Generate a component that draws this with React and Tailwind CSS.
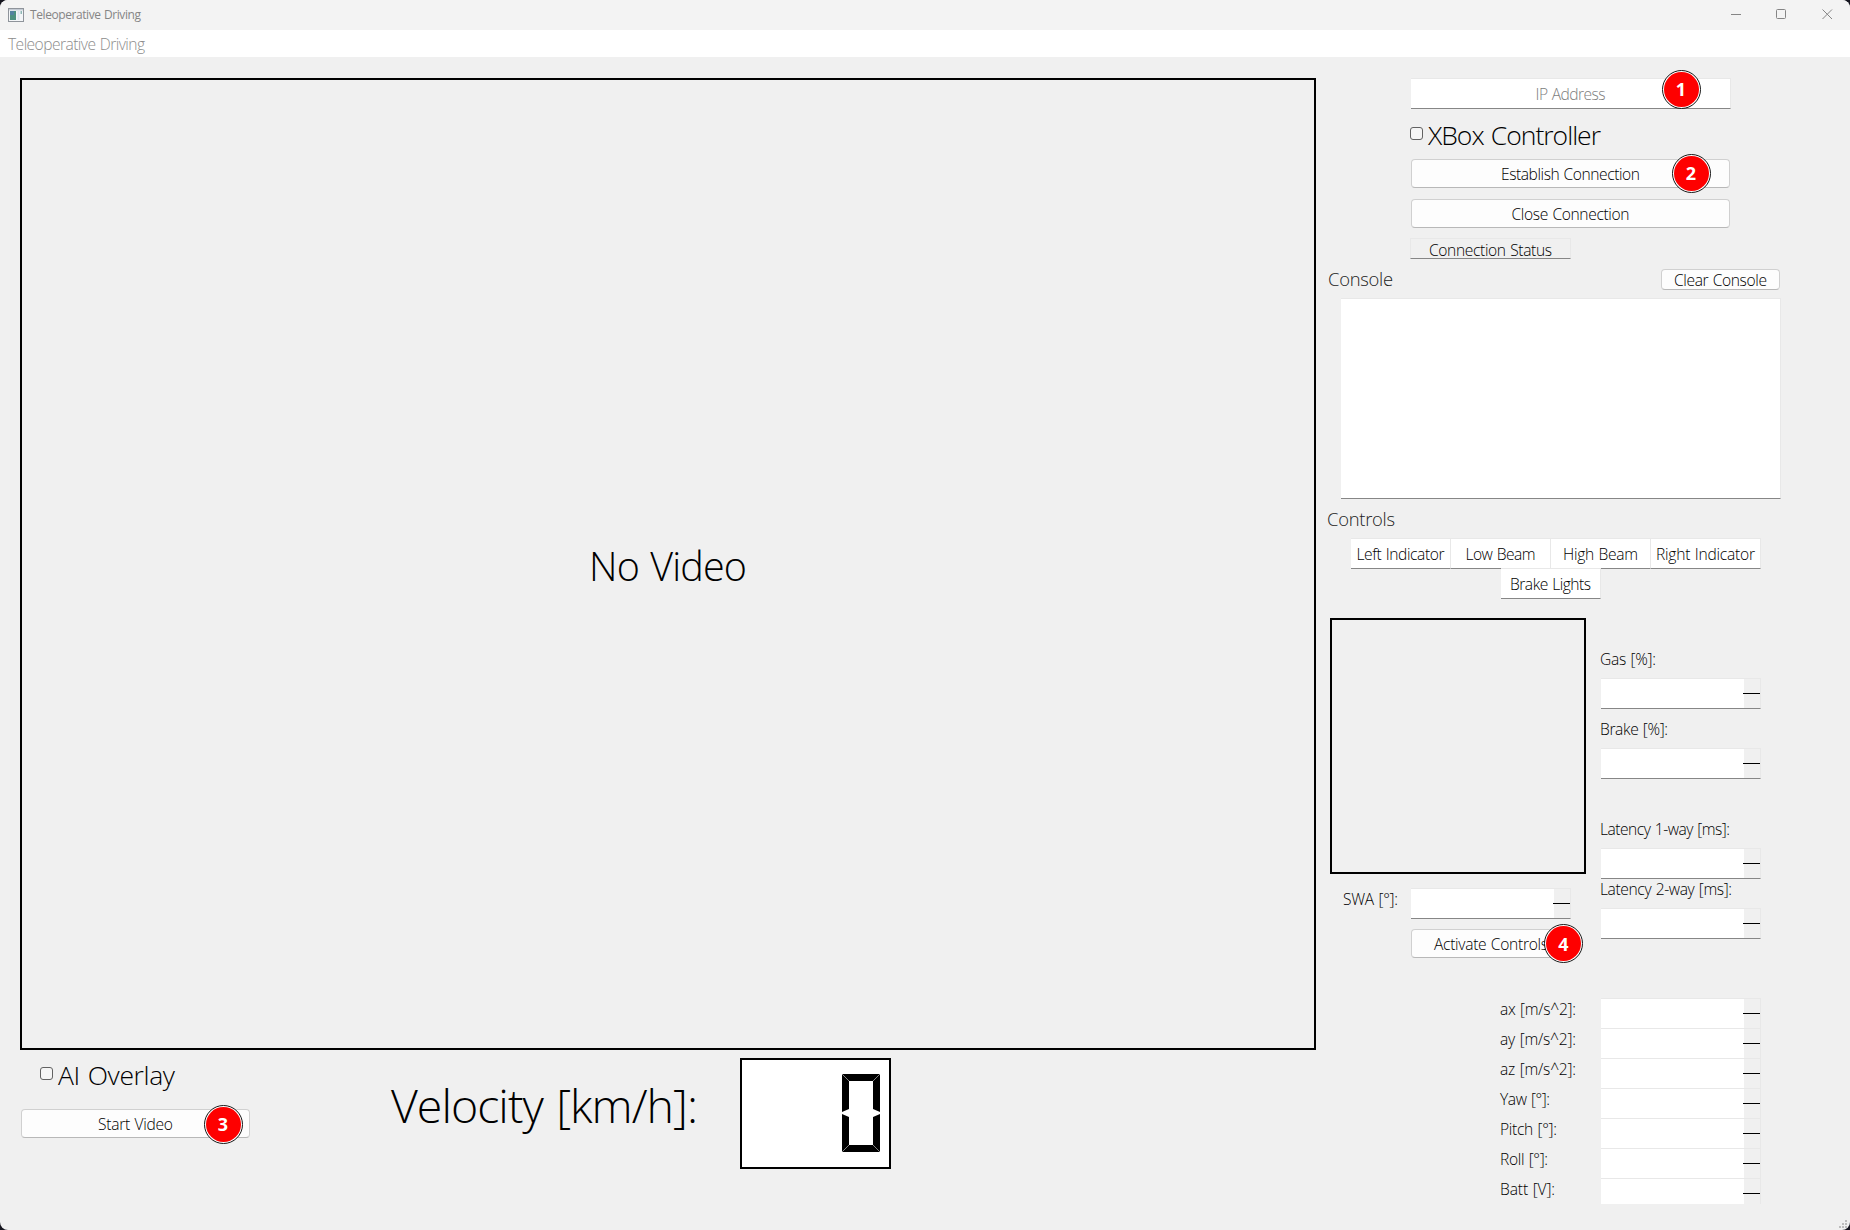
import { useLayoutEffect, useRef } from "react";

// Text whose tracking is adjusted so that its advance is exactly `w` pixels.
function Fit({ w, className = "", children }) {
  const ref = useRef(null);
  useLayoutEffect(() => {
    const el = ref.current;
    el.style.letterSpacing = "0px";
    const natural = el.getBoundingClientRect().width;
    const spacing = (w - natural) / (children.length - 1);
    el.style.letterSpacing = `${spacing}px`;
    el.style.marginRight = `${-spacing}px`;
  }, [w, children]);
  return (
    <span
      ref={ref}
      className={`inline-block whitespace-pre [word-spacing:0.05em] ${className}`}
    >
      {children}
    </span>
  );
}

function Badge({ n, className }) {
  return (
    <div
      className={`absolute z-10 flex size-[39px] items-center justify-center rounded-full border-[1.5px] border-[#161616] bg-white p-px ${className}`}
    >
      <div className="flex size-full items-center justify-center rounded-full bg-[#fe0000] text-[18px] leading-none font-bold text-white">
        {n}
      </div>
    </div>
  );
}

function Button({ children, w, className }) {
  return (
    <button
      className={`flex items-center justify-center rounded-[4px] border border-[#d0d0d0] border-b-[#b8b8b8] bg-[#fdfdfd] pt-px text-[15.6px] leading-4 ${className}`}
    >
      <Fit w={w}>{children}</Fit>
    </button>
  );
}

function Check({ children, w, className }) {
  return (
    <label className={`flex h-8 items-start ${className}`}>
      <span className="mt-2 size-[13px] rounded-[3px] border border-[#626262] bg-[#f5f5f5]" />
      <span className="ml-[5px] text-[26.5px] leading-8">
        <Fit w={w}>{children}</Fit>
      </span>
    </label>
  );
}

// Numeric display with a collapsed spin area at its right end.
function Spin({ className = "h-[31px] border-b border-b-[#868686]" }) {
  return (
    <div
      className={`ml-px flex w-[160px] shrink-0 border-t border-r border-[#e8e8e8] ${className}`}
    >
      <div className="w-[143px] bg-white" />
      <div className="mt-[14px] -ml-px h-px w-[17px] bg-black" />
    </div>
  );
}

function Field({ label, w, className }) {
  return (
    <div className={className}>
      <div className="h-5 text-[15.6px] leading-5">
        <Fit w={w}>{label}</Fit>
      </div>
      <div className="mt-[9px]">
        <Spin />
      </div>
    </div>
  );
}

function Indicator({ children, w, className }) {
  return (
    <div
      className={`flex h-[31px] items-center justify-center border border-l-0 border-[#e8e8e8] border-b-[#868686] bg-white pt-px text-[15.6px] leading-5 ${className}`}
    >
      <Fit w={w}>{children}</Fit>
    </div>
  );
}

const readings = [
  ["ax [m/s^2]:", 76],
  ["ay [m/s^2]:", 76],
  ["az [m/s^2]:", 76],
  ["Yaw [°]:", 50],
  ["Pitch [°]:", 57],
  ["Roll [°]:", 48],
  ["Batt [V]:", 55],
];

export default function App() {
  return (
    <div className="h-[1230px] w-[1850px] bg-[#15151f]">
      <div className="relative flex h-full flex-col overflow-hidden rounded-lg bg-[#f0f0f0] font-['Open_Sans',sans-serif] font-light text-black">
        <header className="flex h-[30px] shrink-0 items-center bg-[#f3f3f3] pb-px text-[#858585]">
          <svg className="ml-2 h-[14px] w-4" viewBox="0 0 16 14">
            <rect x="0.5" y="0.5" width="15" height="13" fill="#f4f6f8" stroke="#8f949b" />
            <rect x="1" y="1" width="14" height="1.4" fill="#c3cad3" />
            <rect x="2" y="3" width="6" height="9" fill="#4e9080" />
            <rect x="2" y="3" width="4" height="4" fill="#5482a0" />
            <rect x="9.5" y="3" width="2" height="9" fill="#dfe5ee" />
            <rect x="12.5" y="3" width="1.5" height="3" fill="#8fb7b5" />
          </svg>
          <span className="ml-1.5 text-xs leading-5 font-normal">
            <Fit w={111}>Teleoperative Driving</Fit>
          </span>
          <svg
            className="mr-[17px] ml-auto h-[11px] w-[103px]"
            viewBox="0 0 103 11"
            fill="none"
            stroke="#858585"
          >
            <path d="M1 5.5H11" />
            <rect x="46.5" y="0.5" width="9" height="9" rx="1" />
            <path d="M92.5 0.5L102 10M102 0.5L92.5 10" />
          </svg>
        </header>

        <nav className="flex h-[27px] shrink-0 items-center bg-white pt-px pl-2 text-[15.6px] leading-5 text-[#8c8c8c]">
          <Fit w={137}>Teleoperative Driving</Fit>
        </nav>

        <main className="flex flex-1">
          <section className="w-[1316px] pt-[21px] pl-5">
            <div className="flex h-[972px] items-center justify-center border-2 border-black pt-[5px] text-[39.5px] leading-none">
              <Fit w={158}>No Video</Fit>
            </div>
            <div className="flex">
              <div className="w-[371px] pt-[9px]">
                <Check w={117} className="ml-5">
                  AI Overlay
                </Check>
                <div className="relative mt-[18px] ml-px w-[229px]">
                  <Button w={75} className="h-[29px] w-full">
                    Start Video
                  </Button>
                  <Badge n="3" className="top-[-4.5px] left-[182.5px]" />
                </div>
              </div>
              <div className="w-[349px] pt-[23px] text-[46.5px] leading-[64px]">
                <Fit w={307}>Velocity [km/h]:</Fit>
              </div>
              <div className="mt-2 flex h-[111px] w-[151px] justify-end border-2 border-black bg-white pt-[14px] pr-[9px]">
                <svg className="h-[78px] w-[38px]" viewBox="0 0 38 78">
                  <path d="M0 0H38L31 7H7Z" />
                  <path d="M0 78H38L31 71H7Z" />
                  <path d="M0 0L7 7V35L0 38ZM38 0L31 7V35L38 38Z" />
                  <path d="M0 78L7 71V43L0 40ZM38 78L31 71V43L38 40Z" />
                  <path
                    d="M0 0L7 7M38 0L31 7M0 78L7 71M38 78L31 71"
                    stroke="#8a8a8a"
                    strokeWidth="0.9"
                  />
                </svg>
              </div>
            </div>
          </section>

          <section className="flex-1 pt-[21px]">
            <div className="relative ml-[95px] w-[320px]">
              <div className="flex h-[31px] items-center justify-center border border-l-0 border-[#e8e8e8] border-b-[#868686] bg-white pt-px text-[15.6px] leading-5 text-[#7d7d7d]">
                <Fit w={70}>IP Address</Fit>
              </div>
              <Badge n="1" className="top-[-8.5px] left-[250.5px]" />
            </div>
            <Check w={173} className="mt-[10px] ml-[94px]">
              XBox Controller
            </Check>
            <div className="relative mt-2 ml-[95px] w-[319px]">
              <Button w={139} className="h-[29px] w-full">
                Establish Connection
              </Button>
              <Badge n="2" className="top-[-5.5px] left-[260.5px]" />
            </div>
            <Button w={118} className="mt-[11px] ml-[95px] h-[29px] w-[319px]">
              Close Connection
            </Button>
            <div className="mt-[10px] ml-[94px] flex h-[21px] w-[161px] items-center justify-center border border-[#e8e8e8] border-b-[#868686] pt-[3px] text-[15.6px] leading-4">
              <Fit w={123}>Connection Status</Fit>
            </div>
            <div className="mt-[10px] ml-3 flex h-[21px] w-[452px] justify-between">
              <div className="text-[18.4px] leading-[19px] text-[#222]">
                <Fit w={65}>Console</Fit>
              </div>
              <Button w={93} className="w-[119px]">
                Clear Console
              </Button>
            </div>
            <div className="mt-2 ml-[25px] h-[201px] w-[440px] border border-l-0 border-[#e8e8e8] border-b-[#868686] bg-white" />
            <div className="mt-2 ml-[11px] h-6 text-[18.4px] leading-[23px] text-[#222]">
              <Fit w={68}>Controls</Fit>
            </div>
            <div className="mt-[7px] ml-[35px] flex">
              <Indicator w={88} className="w-[100px]">
                Left Indicator
              </Indicator>
              <Indicator w={70} className="w-[100px]">
                Low Beam
              </Indicator>
              <Indicator w={75} className="w-[100px]">
                High Beam
              </Indicator>
              <Indicator w={99} className="w-[110px]">
                Right Indicator
              </Indicator>
            </div>
            <Indicator w={81} className="relative -mt-px ml-[185px] w-[100px]">
              Brake Lights
            </Indicator>

            <div className="mt-[19px] ml-[14px] flex">
              <div className="w-[256px]">
                <div className="size-[256px] border-2 border-black" />
                <div className="mt-[14px] flex">
                  <div className="w-20 pl-[13px] text-[15.6px] leading-[22px]">
                    <Fit w={55}>SWA [°]:</Fit>
                  </div>
                  <Spin />
                </div>
                <div className="relative mt-[10px] ml-[81px] w-[160px]">
                  <Button w={114} className="h-[29px] w-full">
                    Activate Controls
                  </Button>
                  <Badge n="4" className="top-[-5px] left-[133px]" />
                </div>
              </div>
              <div className="ml-[14px] pt-[31px]">
                <Field label="Gas [%]:" w={56} />
                <Field label="Brake [%]:" w={68} className="mt-[10px]" />
                <Field label="Latency 1-way [ms]:" w={130} className="mt-10" />
                <Field label="Latency 2-way [ms]:" w={132} />
              </div>
            </div>

            <div className="mt-10 ml-[184px]">
              {readings.map(([label, w], i) => (
                <div key={label} className="flex h-[30px]">
                  <div className="w-[100px] pt-px text-[15.6px] leading-5">
                    <Fit w={w}>{label}</Fit>
                  </div>
                  <Spin className={i === readings.length - 1 ? "h-[26px]" : "h-[30px]"} />
                </div>
              ))}
            </div>
          </section>
        </main>

        <svg
          className="absolute right-[3px] bottom-[2px] size-[8px]"
          viewBox="0 0 8 8"
          fill="#bcbcbc"
        >
          <path d="M6 0h2v2h-2zM3 3h2v2h-2zM6 3h2v2h-2zM0 6h2v2h-2zM3 6h2v2h-2zM6 6h2v2h-2z" />
        </svg>
      </div>
    </div>
  );
}
